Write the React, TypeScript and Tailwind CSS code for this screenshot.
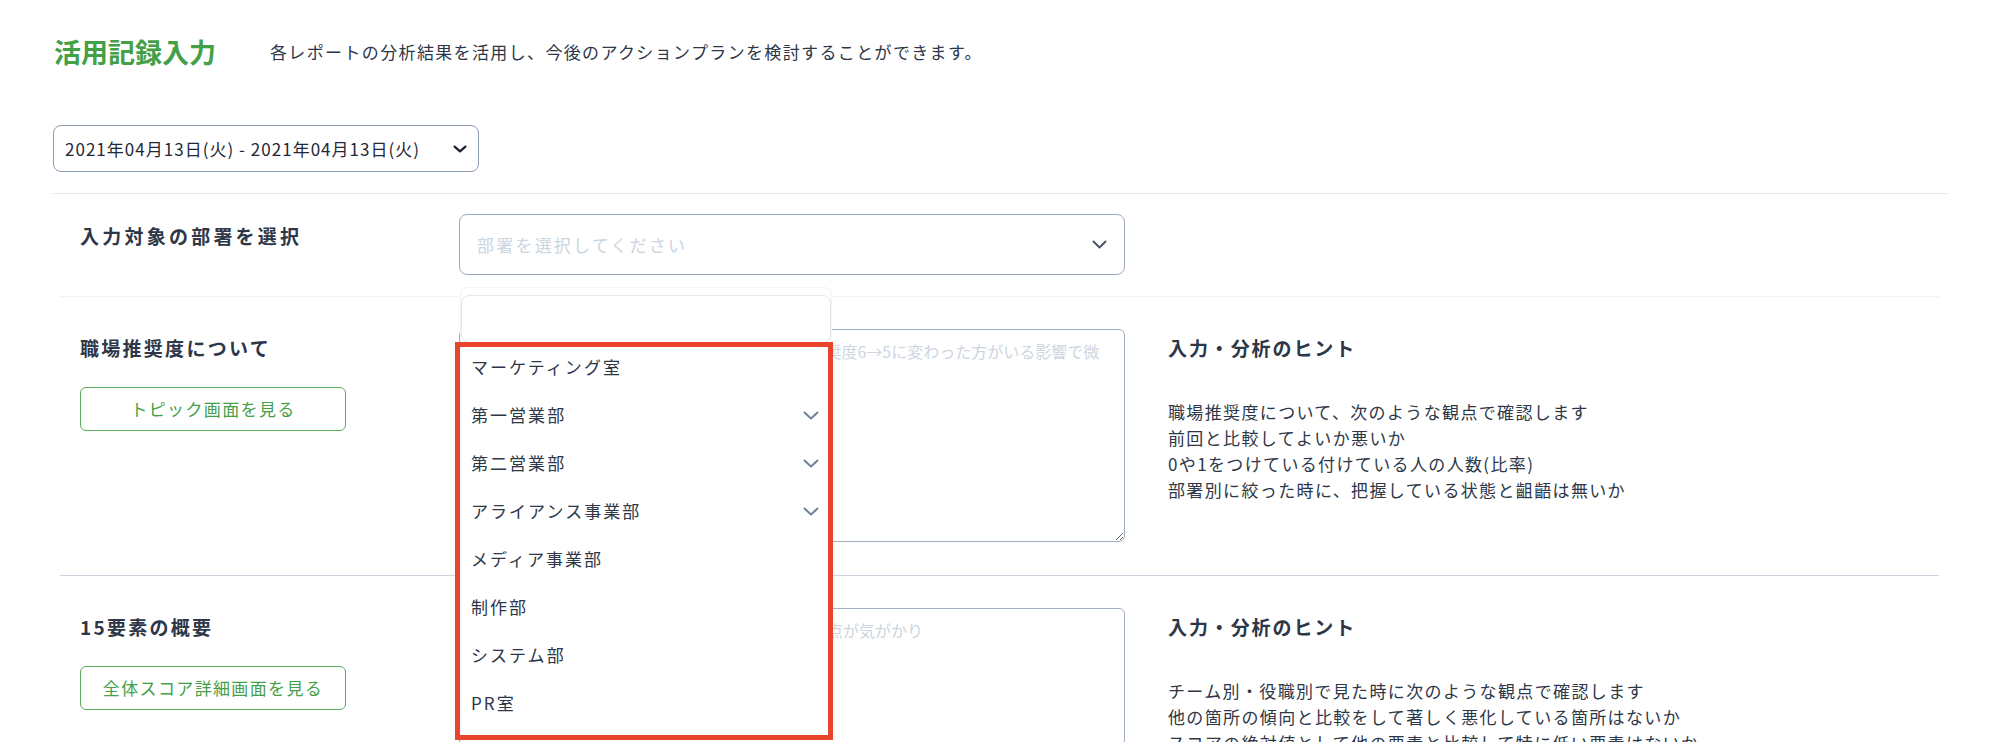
import React from "react";

function Chevron({ w, h, color, stroke }: { w: number; h: number; color: string; stroke: number }) {
  return (
    <svg width={w} height={h} viewBox={`0 0 ${w} ${h}`} fill="none">
      <path
        d={`M${stroke / 2 + 0.5} ${stroke / 2 + 0.5} L${w / 2} ${h - stroke / 2 - 0.5} L${w - stroke / 2 - 0.5} ${stroke / 2 + 0.5}`}
        stroke={color}
        strokeWidth={stroke}
        strokeLinecap="round"
        strokeLinejoin="round"
      />
    </svg>
  );
}

const items: { name: string; more: boolean }[] = [
  { name: "マーケティング室", more: false },
  { name: "第一営業部", more: true },
  { name: "第二営業部", more: true },
  { name: "アライアンス事業部", more: true },
  { name: "メディア事業部", more: false },
  { name: "制作部", more: false },
  { name: "システム部", more: false },
  { name: "PR室", more: false },
];

function Section({
  title,
  button,
  placeholder,
  hintLines,
  border,
}: {
  title: string;
  button: string;
  placeholder: string;
  hintLines: string[];
  border: string;
}) {
  return (
    <div className={`ml-[7px] mr-[9px] border-t ${border} pt-[32px] pb-[33px] pl-[20px] flex`}>
      <div className="w-[379px] shrink-0">
        <div className="mt-[5px] text-[19px] leading-[28px] font-bold tracking-[0.12em] text-[#2d3748]">{title}</div>
        <button className="mt-[25px] w-[266px] h-[44px] rounded-[6px] border border-[#5aad5e] text-[17px] tracking-[0.08em] text-[#45a049] bg-white flex items-center justify-center">
          {button}
        </button>
      </div>
      <textarea
        className="w-[666px] h-[213px] shrink-0 rounded-[6px] border border-[#a3b0c2] pl-[16px] pr-[6px] pt-[8px] text-[16px] leading-[26px] tracking-normal text-[#2d3748] placeholder:text-[#cdd5e0] resize-y outline-none"
        placeholder={placeholder}
      />
      <div className="ml-[43px]">
        <div className="mt-[5px] text-[19px] leading-[28px] font-bold tracking-[0.1em] text-[#2d3748]">入力・分析のヒント</div>
        <div className="mt-[37px] text-[17px] leading-[26px] tracking-[0.08em] text-[#2d3748]">
          {hintLines.map((l) => (
            <div key={l}>{l}</div>
          ))}
        </div>
      </div>
    </div>
  );
}

export default function App() {
  return (
    <div className="relative w-[2000px] h-[742px] overflow-hidden bg-white font-['Noto_Sans_CJK_JP','Noto_Sans',sans-serif] text-[#2d3748]">
      <div className="pl-[53px] pr-[52px] pt-[36px]">
        <div className="flex items-center ml-[1px]">
          <h1 className="text-[27px] leading-[32px] font-bold text-[#43a047]">活用記録入力</h1>
          <p className="ml-[54px] text-[17px] leading-[24px] tracking-[0.08em] text-[#2d3748]">
            各レポートの分析結果を活用し、今後のアクションプランを検討することができます。
          </p>
        </div>

        <div className="mt-[57px] w-[426px] h-[47px] rounded-[8px] border border-[#8e9db5] flex items-center justify-between pl-[11px] pr-[11px]">
          <span className="text-[17px] leading-[24px] tracking-[0.06em] text-[#1f2937]">
            2021年04月13日(火) - 2021年04月13日(火)
          </span>
          <Chevron w={14} h={8} color="#1a202c" stroke={2.2} />
        </div>

        <div className="mt-[21px] border-t border-[#e2e8f0] pt-[20px] pb-[21px] flex items-start">
          <div className="ml-[27px] w-[379px] shrink-0 mt-[8px] text-[19px] leading-[28px] font-bold tracking-[0.17em] text-[#2d3748]">
            入力対象の部署を選択
          </div>
          <div className="w-[666px] h-[61px] rounded-[8px] border border-[#9aa8bd] flex items-center justify-between pl-[17px] pr-[17px]">
            <span className="text-[17px] tracking-[0.13em] text-[#cbd5e0]">部署を選択してください</span>
            <Chevron w={15} h={9} color="#4a5568" stroke={2} />
          </div>
        </div>
      </div>

      <div className="pl-[53px] pr-[52px]">
        <Section
          title="職場推奨度について"
          button="トピック画面を見る"
          border="border-[#edf2f7]"
          placeholder={"前回と比べてスコアが少し下がっており、職場推奨度6→5に変わった方がいる影響で微\n減したと考えられる"}
          hintLines={[
            "職場推奨度について、次のような観点で確認します",
            "前回と比較してよいか悪いか",
            "0や1をつけている付けている人の人数(比率)",
            "部署別に絞った時に、把握している状態と齟齬は無いか",
          ]}
        />
        <Section
          title="15要素の概要"
          button="全体スコア詳細画面を見る"
          border="border-[#cbd5e0]"
          placeholder={"チーム別に見ると、第一営業部のスコアが低めな点が気がかり"}
          hintLines={[
            "チーム別・役職別で見た時に次のような観点で確認します",
            "他の箇所の傾向と比較をして著しく悪化している箇所はないか",
            "スコアの絶対値として他の要素と比較して特に低い要素はないか",
          ]}
        />
      </div>

      {/* dropdown menu */}
      <div className="absolute left-[460px] top-[287px] w-[372px] h-[460px] bg-white rounded-t-[8px] border-t border-x border-[#f1f4f8]">
        <div className="mt-[7px] h-[48px] rounded-[8px] border border-[#e2e8f0]" />
        <div>
          {items.map((it) => (
            <div key={it.name} className="h-[48px] flex items-center justify-between pl-[10px] pr-[12px]">
              <span className="text-[17px] tracking-[0.12em] text-[#2d3748]">{it.name}</span>
              {it.more && <Chevron w={16} h={9} color="#718096" stroke={2} />}
            </div>
          ))}
        </div>
      </div>

      {/* annotation highlight */}
      <div className="absolute left-[455px] top-[342px] w-[378px] h-[398px] border-[5px] border-[#e8452c]" />
    </div>
  );
}
